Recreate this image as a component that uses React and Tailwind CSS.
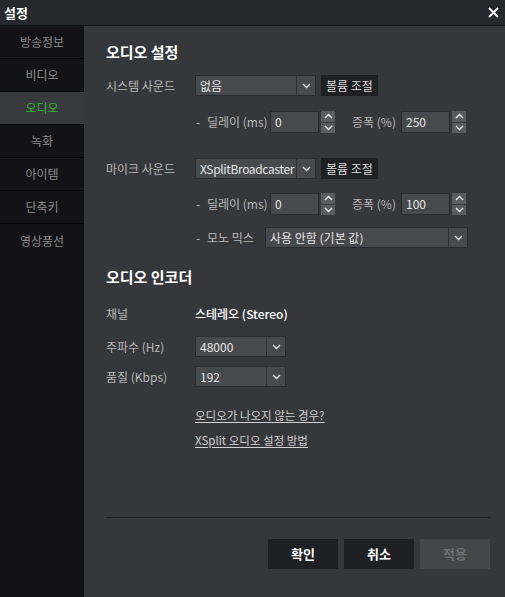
import React from "react";

const FONT = { fontFamily: '"Noto Sans CJK KR", "Noto Sans", sans-serif' };

const NAV = ["방송정보", "비디오", "오디오", "녹화", "아이템", "단축키", "영상풍선"];

function Chevron({ up = false, className = "" }) {
  return (
    <svg className={className} width="9" height="6" viewBox="0 0 9 6" fill="none" stroke="currentColor" strokeWidth={1.4}>
      <path d={up ? "M1 5L4.5 1.5L8 5" : "M1 1L4.5 4.5L8 1"} />
    </svg>
  );
}

function Select({ value, width, tight = false }) {
  return (
    <div className={`flex h-[21px] items-stretch border border-[#2a2b2e] bg-[#48494d] ${width}`}>
      <span
        className={`flex-1 overflow-hidden whitespace-nowrap pl-[4px] text-[12px] leading-[19px] text-[#e6e6e6] ${
          tight ? "tracking-[-0.35px]" : ""
        }`}
      >
        {value}
      </span>
      <span className="flex w-[19px] shrink-0 items-center justify-center border-l border-[#2f3033] text-[#e6e6e6]">
        <Chevron />
      </span>
    </div>
  );
}

function Spin({ value }) {
  return (
    <div className="flex h-[22px] items-stretch gap-[2px]">
      <div className="w-[49px] border border-[#2a2b2e] bg-[#48494d] pl-[4px] text-[12px] leading-[20px] text-[#e6e6e6]">{value}</div>
      <div className="flex w-[14px] flex-col gap-[1px]">
        <span className="flex flex-1 items-center justify-center bg-[#5b5c60] text-[#eee]"><Chevron up /></span>
        <span className="flex flex-1 items-center justify-center bg-[#5b5c60] text-[#eee]"><Chevron /></span>
      </div>
    </div>
  );
}

function DelayRow({ delay, gain }) {
  return (
    <div className="flex items-center whitespace-nowrap pl-[90px] text-[12px] text-[#b9b9b9]">
      <span className="w-[11px]">-</span>
      <span className="w-[63px]">딜레이 (ms)</span>
      <Spin value={delay} />
      <span className="ml-[17px] w-[49px]">증폭 (%)</span>
      <Spin value={gain} />
    </div>
  );
}

function VolumeButton() {
  return (
    <button className="ml-[5px] h-[21px] w-[57px] whitespace-nowrap bg-[#1f2023] text-[12px] text-[#dcdcdc]">볼륨 조절</button>
  );
}

export default function App() {
  return (
    <div className="flex h-[597px] w-[505px] flex-col overflow-hidden bg-[#36373b]" style={FONT}>
      {/* Title bar */}
      <div className="flex h-[26px] shrink-0 items-center justify-between border-b border-[#111214] bg-[#25282c] pl-[4px] pr-[6px]">
        <span className="text-[13px] font-bold text-white">설정</span>
        <svg width="11" height="11" viewBox="0 0 11 11" stroke="white" strokeWidth={1.8}>
          <path d="M1 1L10 10M10 1L1 10" />
        </svg>
      </div>

      <div className="flex flex-1">
        {/* Sidebar */}
        <div className="w-[84px] shrink-0 bg-[#131316]">
          {NAV.map((item, i) => (
            <div
              key={item}
              className={`flex h-[33px] items-center justify-center text-[12px] ${
                i < NAV.length - 1 ? "border-b border-black" : ""
              } ${item === "오디오" ? "bg-[#38393d] text-[#2fb82f]" : "text-[#8c8c8c]"}`}
            >
              {item}
            </div>
          ))}
        </div>

        {/* Main */}
        <div className="flex flex-1 flex-col whitespace-nowrap pl-[22px] pr-[15px]">
          <h2 className="mt-[16px] h-[20px] text-[15px] font-bold leading-[20px] text-white">오디오 설정</h2>

          <div className="mt-[13px] flex h-[21px] items-center text-[12px] text-[#b9b9b9]">
            <span className="w-[89px]">시스템 사운드</span>
            <Select value="없음" width="w-[121px]" />
            <VolumeButton />
          </div>

          <div className="mt-[15px] h-[22px]">
            <DelayRow delay="0" gain="250" />
          </div>

          <div className="mt-[25px] flex h-[21px] items-center text-[12px] text-[#b9b9b9]">
            <span className="w-[89px]">마이크 사운드</span>
            <Select value="XSplitBroadcaster" width="w-[121px]" tight />
            <VolumeButton />
          </div>

          <div className="mt-[14px] h-[22px]">
            <DelayRow delay="0" gain="100" />
          </div>

          <div className="mt-[12px] flex h-[21px] items-center pl-[90px] text-[12px] text-[#b9b9b9]">
            <span className="w-[11px]">-</span>
            <span className="w-[58px]">모노 믹스</span>
            <Select value="사용 안함 (기본 값)" width="w-[203px]" />
          </div>

          <h2 className="mt-[19px] h-[20px] text-[15px] font-bold leading-[20px] text-white">오디오 인코더</h2>

          <div className="mt-[17px] flex h-[20px] items-center text-[12px] text-[#b9b9b9]">
            <span className="w-[89px]">채널</span>
            <span className="font-medium text-white">스테레오 (Stereo)</span>
          </div>

          <div className="mt-[12px] flex h-[21px] items-center text-[12px] text-[#b9b9b9]">
            <span className="w-[89px]">주파수 (Hz)</span>
            <Select value="48000" width="w-[91px]" />
          </div>

          <div className="mt-[9px] flex h-[21px] items-center text-[12px] text-[#b9b9b9]">
            <span className="w-[89px]">품질 (Kbps)</span>
            <Select value="192" width="w-[91px]" />
          </div>

          <div className="mt-[20px] h-[16px] pl-[89px] text-[11.5px] leading-[16px] text-[#d0d0d0]">
            <a className="underline underline-offset-2">오디오가 나오지 않는 경우?</a>
          </div>
          <div className="mt-[9px] h-[16px] pl-[89px] text-[11.5px] leading-[16px] text-[#d0d0d0]">
            <a className="underline underline-offset-2">XSplit 오디오 설정 방법</a>
          </div>

          <div className="mt-[69px] h-px w-[385px] bg-[#222326]" />

          <div className="mt-[21px] flex justify-end gap-[6px] pr-[1px]">
            <button className="h-[30px] w-[70px] bg-[#1f2023] text-[13px] font-bold text-white">확인</button>
            <button className="h-[30px] w-[70px] bg-[#1f2023] text-[13px] font-bold text-white">취소</button>
            <button className="h-[30px] w-[70px] bg-[#45464a] text-[13px] font-bold text-[#6e6f73]">적용</button>
          </div>
        </div>
      </div>
    </div>
  );
}
